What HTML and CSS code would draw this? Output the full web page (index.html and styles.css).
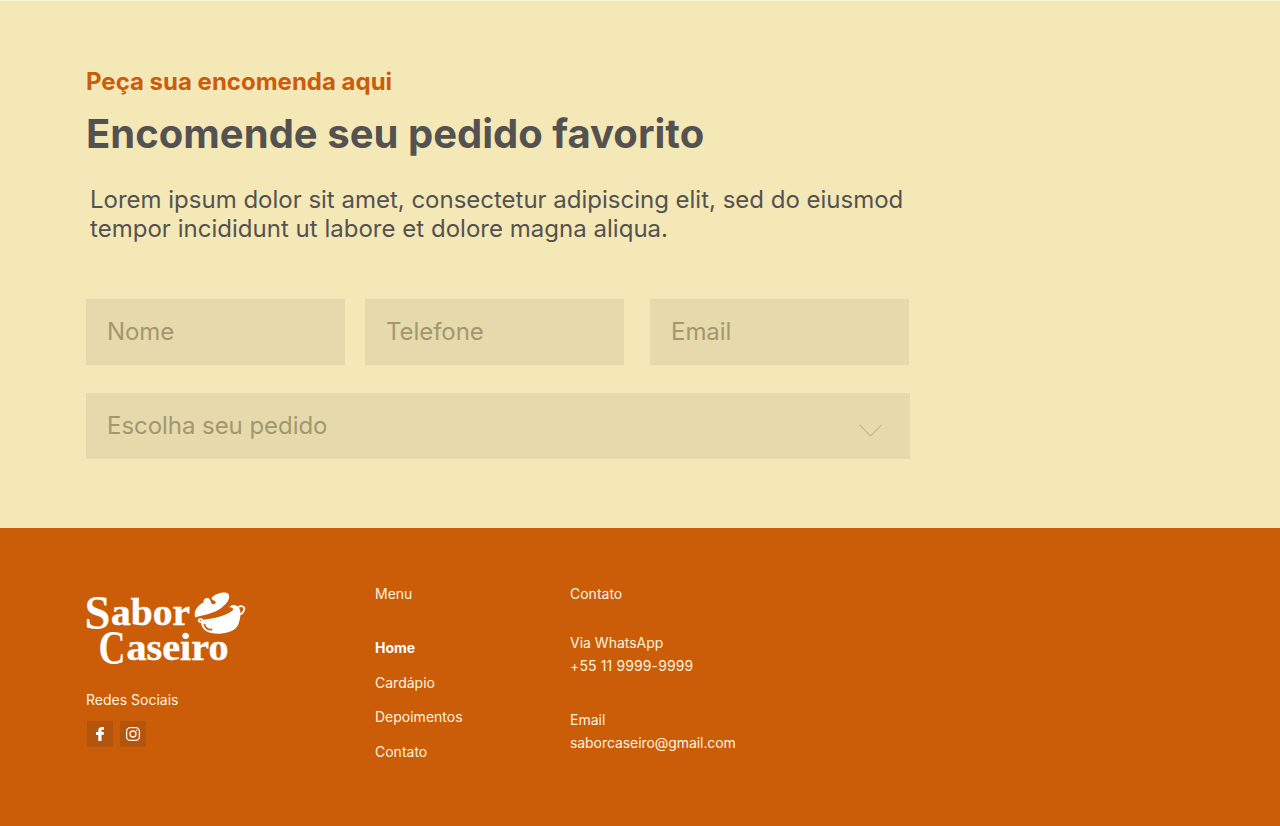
FILE: index.html
```html
<!DOCTYPE html>
<html lang="pt-BR">
<head>
<meta charset="utf-8">
<title>Sabor Caseiro</title>
<link rel="stylesheet" href="styles.css">
</head>
<body>
<main class="order">
  <p class="eyebrow">Peça sua encomenda aqui</p>
  <h1 class="title">Encomende seu pedido favorito</h1>
  <p class="lead">Lorem ipsum dolor sit amet, consectetur adipiscing elit, sed do eiusmod<br><span class="lead-end">tempor incididunt ut labore et dolore magna aliqua.</span></p>
  <form class="form">
    <div class="field">Nome</div>
    <div class="field">Telefone</div>
    <div class="field">Email</div>
    <div class="field select">
      <span>Escolha seu pedido</span>
      <svg class="chevron" width="24" height="13" viewBox="0 0 24 13"><path d="M.5.8 11.500 12 22.500.8" fill="none" stroke="#b0a57b" stroke-width="1"/></svg>
    </div>
  </form>
</main>
<footer class="footer">
  <section class="brand">
    <svg class="logo" width="162" height="76" viewBox="84 591 162 76" fill="#fff">
      <g class="logo-text">
        <text class="initial" x="84.500" y="629.300" textLength="26" lengthAdjust="spacingAndGlyphs">S</text>
        <text class="small" x="111" y="625.300" textLength="79" lengthAdjust="spacingAndGlyphs">abor</text>
        <text class="initial" x="98.500" y="663.800" textLength="27" lengthAdjust="spacingAndGlyphs">C</text>
        <text class="small" x="126.500" y="659.800" textLength="102" lengthAdjust="spacingAndGlyphs">aseiro</text>
      </g>
      <path d="M195.300 617.500C193 611 198 605 203.500 602.500C203 599 206 597 209 598.500C211 600 210.500 603.500 213 604.300C215.500 604.500 216.500 602.300 215 601C213.500 600 211.500 600 211.500 598C214 594 225 590.500 228.500 594C231.500 599 225 605.500 219 609.500C212 614 203 615 195.300 617.500Z"/>
      <path d="M201 620C213 619 229 615 233.500 609.500C232.500 607.500 231 607 229.500 607.500C230 604.500 235 604 238 606.500C241.500 609.500 241 617 238.500 624C236 631.500 225 634.300 215 633.500C205 633 200.500 627.500 201 620Z"/>
      <path d="M238.500 607C241 605.300 245 606.500 244.300 609.300C243.500 612.500 242 614 240 614.500M203 620C198 617.500 197 621.500 201.500 622.500" fill="none" stroke="#fff" stroke-width="1.700"/>
      <path d="M204.500 624.500C205.500 628 208 630 211.500 629.500" fill="none" stroke="#cb5c08" stroke-width="1.800" stroke-linecap="round"/>
    </svg>
    <p class="social-label">Redes Sociais</p>
    <div class="social">
      <a class="social-link"><svg width="26" height="26" viewBox="0 0 26 26"><path d="M11.300 20V14H9V11H11.300V9.300C11.300 7 13 6 15 6H17V8.700H15.700C14.800 8.700 14.500 9.100 14.500 9.800V11H17L16.500 14H14.500V20Z" fill="#fff"/></svg></a>
      <a class="social-link"><svg width="26" height="26" viewBox="0 0 26 26" fill="none" stroke="#fff6e6" stroke-width="1.300"><rect x="6.600" y="6.600" width="12.800" height="12.800" rx="3.700"/><circle cx="13" cy="13" r="3"/><circle cx="16.800" cy="9.200" r=".8" fill="#fff6e6" stroke="none"/></svg></a>
    </div>
  </section>
  <nav class="menu">
    <p class="menu-title">Menu</p>
    <a class="active">Home</a>
    <a>Cardápio</a>
    <a>Depoimentos</a>
    <a>Contato</a>
  </nav>
  <section class="contact">
    <p class="contact-title">Contato</p>
    <p>Via WhatsApp<br><span class="phone">+55 11 9999-9999</span></p>
    <p class="mail">Email<br><span class="address">saborcaseiro@gmail.com</span></p>
  </section>
</footer>
</body>
</html>
```
FILE: styles.css
```css
* { box-sizing: border-box; }
body { margin: 0; width: 1280px; height: 826px; overflow: hidden; font-family: Inter, "Liberation Sans", sans-serif; background: #f4e8b6; display: flex; flex-direction: column; }
p, h1 { margin: 0; }
.order { height: 528px; flex: none; padding: 66px 0 0 86px; border-top: 1px solid #f8f7dc; }
.eyebrow { font-size: 24px; line-height: 29px; font-weight: 700; color: #cb5c0c; }
.title { margin-top: 14px; font-size: 40px; line-height: 48px; font-weight: 700; color: #545251; letter-spacing: .02px; }
.lead { margin: 27px 0 0 4px; font-size: 24px; line-height: 29px; color: #545251; white-space: nowrap; letter-spacing: -.01px; }
.lead-end { letter-spacing: .02px; }
.form { margin-top: 56px; display: grid; grid-template-columns: 259px 265px 260px; column-gap: 20px; row-gap: 28px; width: 824px; }
.field { height: 66px; width: 259px; padding-left: 21px; background: #e6daac; color: #a2986f; font-size: 24px; line-height: 66px; letter-spacing: -.05px; }
.select { grid-column: 1 / 4; width: 824px; display: flex; justify-content: space-between; padding-right: 27px; }
.chevron { margin-top: 31px; }
.footer { height: 298px; flex: none; background: #cb5c08; padding-left: 84px; display: flex; font-size: 14px; line-height: 23px; color: #fff3df; }
.brand { width: 291px; padding-top: 63px; }
.logo { display: block; overflow: visible; }
.logo-text { font-family: "Liberation Serif", serif; font-weight: 700; font-size: 38px; }
.small { stroke: #fff; stroke-width: .4px; }
.initial { font-size: 48px; }
.social-label { margin: 21px 0 0 2px; }
.social { display: flex; gap: 7px; margin: 10px 0 0 3px; }
.social-link { width: 26px; height: 26px; background: #b3540f; }
.social-link svg { display: block; }
.menu { width: 195px; padding-top: 54px; display: flex; flex-direction: column; }
.menu-title { margin-bottom: 31px; }
.menu a { margin-bottom: 11.600px; }
.active { font-weight: 700; color: #fff; }
.contact { padding-top: 54px; }
.contact-title { margin-bottom: 26px; }
.phone { letter-spacing: .12px; }
.mail { margin-top: 31px; }
.address { letter-spacing: -.07px; }
```
